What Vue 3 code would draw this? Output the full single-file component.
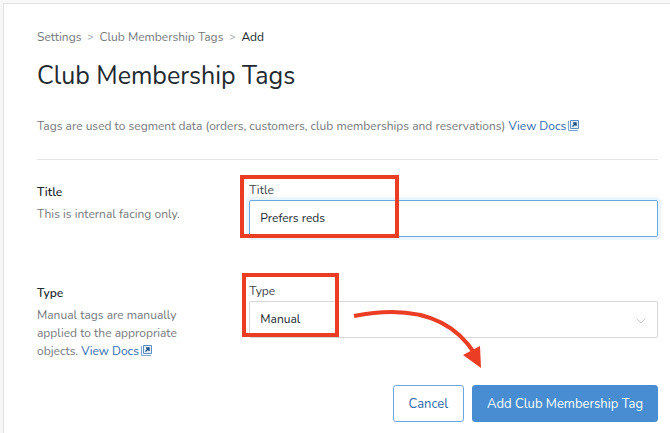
<template>
  <main class="page">
    <nav class="breadcrumb" aria-label="Breadcrumb">
      <template v-for="crumb in crumbs" :key="crumb">
        <a href="#">{{ crumb }}</a>
        <span class="separator">&gt;</span>
      </template>
      <span class="current">Add</span>
    </nav>

    <h1>Club Membership Tags</h1>

    <p class="intro">
      Tags are used to segment data (orders, customers, club memberships and reservations)
      <a href="#" class="docs-link">View Docs<svg class="docs-icon" viewBox="0 0 11 11" aria-hidden="true">
        <path d="M.5 1v9.5H10" class="docs-back" />
        <path d="M2.5.5h8v8h-8z" />
        <path d="M4.5 6.5l3-3M5 3h3v3" class="docs-arrow" />
      </svg></a>
    </p>

    <form @submit.prevent>
      <section class="row">
        <div class="info">
          <h2>Title</h2>
          <p>This is internal facing only.</p>
        </div>
        <div class="field">
          <label for="tag-title">Title</label>
          <input id="tag-title" v-model="title" type="text" class="control focused" />
          <span class="highlight highlight-title"></span>
        </div>
      </section>

      <section class="row">
        <div class="info">
          <h2>Type</h2>
          <p>
            Manual tags are manually applied to the appropriate objects.
            <a href="#" class="docs-link">View Docs<svg class="docs-icon" viewBox="0 0 11 11" aria-hidden="true">
              <path d="M.5 1v9.5H10" class="docs-back" />
              <path d="M2.5.5h8v8h-8z" />
              <path d="M4.5 6.5l3-3M5 3h3v3" class="docs-arrow" />
            </svg></a>
          </p>
        </div>
        <div class="field">
          <label for="tag-type">Type</label>
          <div class="select-wrap">
            <select id="tag-type" v-model="type" class="control">
              <option>Manual</option>
              <option>Dynamic</option>
            </select>
            <svg class="chevron" viewBox="0 0 10 6" aria-hidden="true">
              <path d="M.5.5L5 5 9.5.5" />
            </svg>
          </div>
          <span class="highlight highlight-type"></span>
          <svg class="arrow" viewBox="0 0 132 62" aria-hidden="true">
            <path d="M2 8C58-3 99 8 123 46" class="arrow-line" />
            <path d="M111 47L128 38 129 60z" class="arrow-head" />
          </svg>
        </div>
      </section>

      <div class="actions">
        <button type="button" class="btn">Cancel</button>
        <button type="submit" class="btn btn-primary">Add Club Membership Tag</button>
      </div>
    </form>
  </main>
</template>

<script setup>
import { ref } from 'vue'

const crumbs = ['Settings', 'Club Membership Tags']
const title = ref('Prefers reds')
const type = ref('Manual')
</script>

<style>
body {
  background: #f7f7f7;
}
</style>

<style scoped>
.page {
  box-sizing: border-box;
  min-height: calc(100vh - 3px);
  margin: 3px 0 0 3px;
  padding: 24px 12px 11px 33px;
  border-top: 1px solid #e2e2e2;
  border-left: 1px solid #e2e2e2;
  background: #fff;
  color: #22292f;
  font-family: Nunito, Lato, sans-serif;
  font-size: 12px;
  line-height: 18px;
}

h1,
h2,
p {
  margin: 0;
}

.breadcrumb {
  display: flex;
  gap: 6px;
  color: #76797d;
}

.breadcrumb a {
  color: inherit;
  text-decoration: none;
}

.separator {
  font-size: 10px;
}

.current {
  color: #22292f;
}

h1 {
  margin-top: 12px;
  font-size: 25px;
  font-weight: 400;
  line-height: 36px;
}

.intro {
  margin-top: 23px;
  padding-bottom: 24px;
  border-bottom: 1px solid #e4e4e4;
  color: #76797d;
}

.docs-link {
  color: #2d69ad;
  text-decoration: none;
  white-space: nowrap;
}

.docs-icon {
  width: 11px;
  height: 11px;
  margin-left: 2px;
  vertical-align: -1px;
  fill: #e4eef8;
  stroke: #5a8dc4;
}

.docs-back {
  fill: none;
  stroke: #7ba5d3;
}

.docs-arrow {
  fill: none;
  stroke: #1d4f85;
  stroke-width: 1.4;
}

.row {
  display: grid;
  grid-template-columns: 1fr 2fr;
  gap: 8px;
  margin-top: 22px;
}

.row + .row {
  margin-top: 46px;
}

.info {
  padding: 1px 36px 0 0;
  color: #76797d;
}

.info h2 {
  margin-bottom: 4px;
  color: #22292f;
  font-size: 12px;
  font-weight: 600;
  line-height: 18px;
}

.field {
  position: relative;
}

label {
  display: block;
  margin-bottom: 2px;
  color: #3d4349;
  line-height: 16px;
}

.control {
  display: block;
  box-sizing: border-box;
  width: 100%;
  height: 37px;
  padding: 0 10px 2px;
  border: 1px solid #d8d8d8;
  border-radius: 2px;
  outline: none;
  background: #fff;
  color: #22292f;
  font: inherit;
  appearance: none;
}

.focused {
  border-color: #6ea8e0;
  box-shadow: 0 0 0 3px #ebf5fd;
}

.select-wrap {
  position: relative;
}

.chevron {
  position: absolute;
  top: 17px;
  right: 12px;
  width: 10px;
  height: 6px;
  fill: none;
  stroke: #c8c8c8;
}

.highlight {
  position: absolute;
  box-sizing: border-box;
  border: 4px solid #ea3d23;
  pointer-events: none;
}

.highlight-title {
  top: -7px;
  left: -9px;
  width: 159px;
  height: 63px;
}

.highlight-type {
  top: -10px;
  left: -7px;
  width: 97px;
  height: 64px;
}

.arrow {
  position: absolute;
  top: 25px;
  left: 103px;
  width: 132px;
  height: 62px;
  fill: none;
  pointer-events: none;
}

.arrow-line {
  stroke: #ea3d23;
  stroke-width: 4;
}

.arrow-head {
  fill: #ea3d23;
}

.actions {
  display: flex;
  justify-content: flex-end;
  gap: 8px;
  margin-top: 25px;
}

.btn {
  height: 37px;
  padding: 0 15px;
  border: 1px solid #6ea8e0;
  border-radius: 3px;
  background: #fff;
  color: #2d69ad;
  font: inherit;
  font-size: 13px;
  cursor: pointer;
}

.btn-primary {
  padding: 0 14px;
  border-color: #488dd1;
  background: #488dd1;
  color: #fff;
}
</style>
